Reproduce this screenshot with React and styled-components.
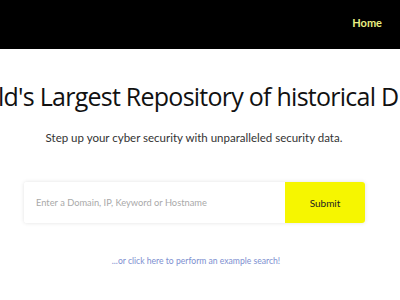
import React from 'react';
import styled, { createGlobalStyle } from 'styled-components';

const GlobalStyle = createGlobalStyle`
  html, body {
    margin: 0;
    padding: 0;
    background: #ffffff;
  }
  body {
    font-family: Lato, "Open Sans", sans-serif;
    overflow: hidden;
  }
`

const Page = styled.div`
  width: 400px;
  height: 300px;
  overflow: hidden;
  display: flex;
  flex-direction: column;
`

const TopBar = styled.header`
  height: 49px;
  background: #000000;
  display: flex;
  justify-content: flex-end;
  align-items: center;
  padding: 0 18px 4px 0;
  box-sizing: border-box;
`

const NavLink = styled.a`
  color: #e8ee82;
  font-family: Lato, sans-serif;
  font-size: 11px;
  font-weight: 700;
  text-decoration: none;
`

const Hero = styled.main`
  display: flex;
  flex-direction: column;
  align-items: center;
`

const Title = styled.h1`
  margin: 31px 0 0 36px;
  font-family: "Open Sans", sans-serif;
  font-weight: 400;
  font-size: 25px;
  letter-spacing: -0.75px;
  line-height: 32px;
  color: #111111;
  white-space: nowrap;
`

const Subtitle = styled.p`
  margin: 18px 0 0 -12px;
  font-size: 11.5px;
  line-height: 16px;
  color: #333333;
`

const SearchForm = styled.form`
  margin-top: 36px;
  display: flex;
  width: 341px;
  height: 41px;
  box-shadow: 0 0 4px rgba(0, 0, 0, 0.12);
  border-radius: 3px;
  margin-left: -11px;
`

const SearchInput = styled.input`
  flex: 1;
  border: none;
  outline: none;
  padding: 0 12px;
  font-family: Lato, sans-serif;
  font-size: 9.3px;
  background: #fff;
  border-radius: 3px 0 0 3px;
  &::placeholder {
    color: #a9a9a9;
  }
`

const SubmitButton = styled.button`
  width: 80px;
  border: none;
  background: #f6f600;
  color: #222;
  font-family: Lato, sans-serif;
  font-size: 10px;
  border-radius: 0 3px 3px 0;
`

const ExampleLink = styled.a`
  margin-top: 33px;
  margin-left: -8px;
  font-size: 8.6px;
  color: #7d8fd0;
  text-decoration: none;
`

export default function App() {
  return (
    <Page>
      <GlobalStyle />
      <TopBar>
        <NavLink href="#">Home</NavLink>
      </TopBar>
      <Hero>
        <Title>World's Largest Repository of historical DNS data</Title>
        <Subtitle>Step up your cyber security with unparalleled security data.</Subtitle>
        <SearchForm onSubmit={(e) => e.preventDefault()}>
          <SearchInput type="text" placeholder="Enter a Domain, IP, Keyword or Hostname" />
          <SubmitButton type="submit">Submit</SubmitButton>
        </SearchForm>
        <ExampleLink href="#">...or click here to perform an example search!</ExampleLink>
      </Hero>
    </Page>
  );
}
